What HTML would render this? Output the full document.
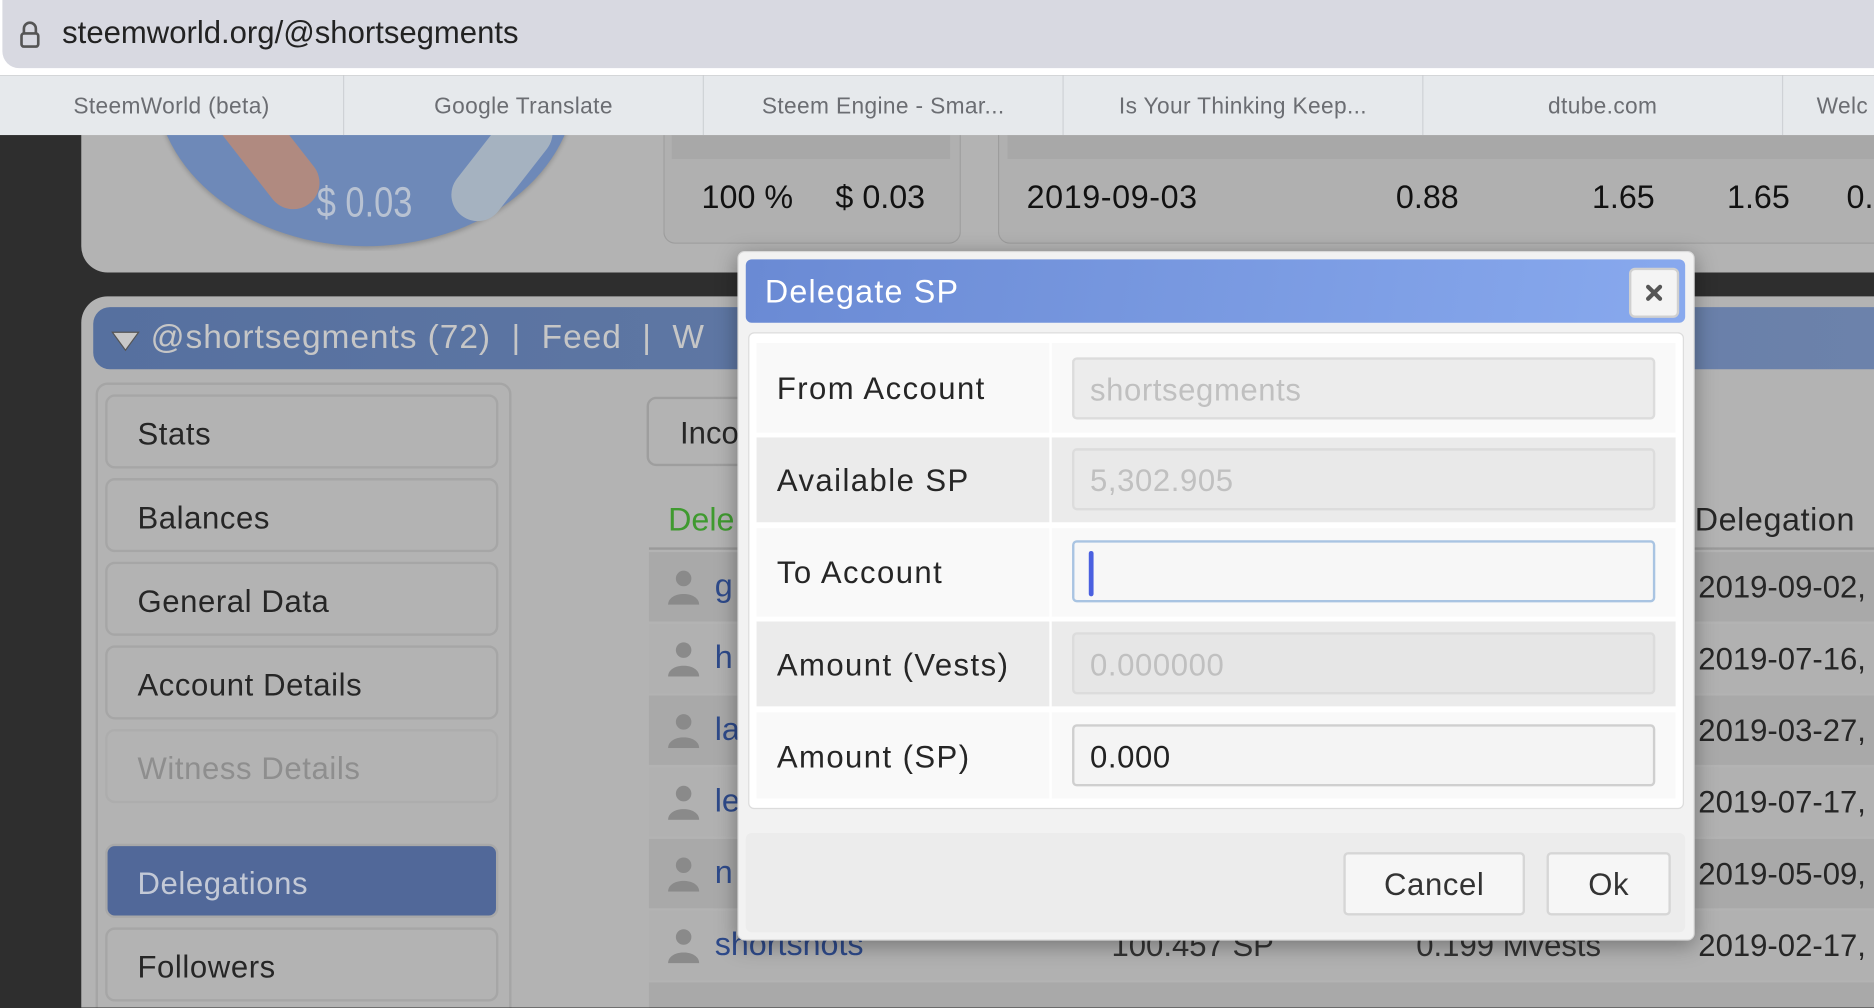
<!DOCTYPE html>
<html><head><meta charset="utf-8"><style>
html,body{margin:0;padding:0;width:1874px;height:1008px;overflow:hidden;background:#2e2e2e;font-family:"Liberation Sans","DejaVu Sans",sans-serif}
#s{position:absolute;left:0;top:0;width:1568px;height:843px;transform:scale(1.19515);transform-origin:0 0;overflow:hidden;background:#2e2e2e}
.a{position:absolute}
.tab{position:absolute;top:63px;height:50px;line-height:54px;text-align:center;color:#6b6d72;font-size:19px;border-right:1px solid #cfd2d6;letter-spacing:.3px}
.mb{position:absolute;left:88px;width:329px;height:62px;border:2px solid #a6a6a6;border-radius:8px;background:#b3b3b3;font-size:26px;color:#262626;line-height:62px;padding-left:25px;box-sizing:border-box;letter-spacing:.5px}
.row{position:absolute;left:543px;width:1025px;height:58px}
.pic{position:absolute;left:558px;width:28px;height:30px}
.nm{position:absolute;left:598px;font-size:27px;color:#2e4a8a}
.dt{position:absolute;left:1421px;font-size:26px;color:#262626}
.lab{position:absolute;left:650px;font-size:26px;color:#262626;letter-spacing:1.2px}
.inp{position:absolute;left:897px;width:488px;height:52px;box-sizing:border-box;border:2px solid #dcdcdc;border-radius:4px;background:#ececec;font-size:26px;color:#c0c0c0;padding-left:13px;line-height:50px;letter-spacing:.5px}
.btn{position:absolute;top:713px;height:53px;box-sizing:border-box;border:2px solid #d6d6d6;border-radius:4px;background:#f6f6f6;font-size:26px;color:#333;text-align:center;line-height:51px;letter-spacing:.5px}
</style></head><body><div id="s">
<!-- page content (dimmed) -->
<div class="a" style="left:68px;top:100px;width:1520px;height:128px;background:#b3b3b3;border-radius:0 0 0 22px"></div>
<div class="a" style="left:130px;top:100px;width:360px;height:110px;overflow:hidden">
 <div class="a" style="left:0;top:-170px;width:352px;height:276px;border-radius:50%;background:#6e89b8;box-shadow:0 2px 4px rgba(0,0,0,.2)"></div>
 <div class="a" style="left:85px;top:-170px;width:180px;height:176px;border-radius:50%;background:#a3adb8"></div>
 <div class="a" style="left:40px;top:5px;width:110px;height:44px;border-radius:22px;background:#b08a80;transform:rotate(52deg)"></div>
 <div class="a" style="left:235px;top:15px;width:110px;height:44px;border-radius:22px;background:#a5b2c0;transform:rotate(-52deg)"></div>
</div>
<div class="a" style="left:265px;top:148px;font-size:36px;color:#b8c2d2;transform:scaleX(.8);transform-origin:0 0">$ 0.03</div>
<div class="a" style="left:555px;top:100px;width:247px;height:103px;background:#b0b0b0;border:1px solid #9d9d9d;border-top:none;border-radius:0 0 10px 10px"></div>
<div class="a" style="left:562px;top:100px;width:233px;height:33px;background:#a8a8a8"></div>
<div class="a" style="left:587px;top:150px;font-size:27px;color:#111">100 %</div>
<div class="a" style="left:699px;top:150px;font-size:27px;color:#111">$ 0.03</div>
<div class="a" style="left:835px;top:100px;width:740px;height:103px;background:#b0b0b0;border:1px solid #9d9d9d;border-top:none;border-radius:0 0 0 10px"></div>
<div class="a" style="left:843px;top:100px;width:730px;height:33px;background:#a8a8a8"></div>
<div class="a" style="left:859px;top:150px;font-size:27px;color:#111;letter-spacing:.5px">2019-09-03</div>
<div class="a" style="left:1168px;top:150px;font-size:27px;color:#111">0.88</div>
<div class="a" style="left:1332px;top:150px;font-size:27px;color:#111">1.65</div>
<div class="a" style="left:1445px;top:150px;font-size:27px;color:#111">1.65</div>
<div class="a" style="left:1545px;top:150px;font-size:27px;color:#111">0.</div>

<!-- browser chrome -->
<div class="a" style="left:0;top:0;width:1568px;height:63px;background:#fff"></div>
<div class="a" style="left:2px;top:0;width:1580px;height:57px;background:#d8d9e1;border-radius:0 0 0 14px"></div>
<svg class="a" style="left:15px;top:17px" width="20" height="24" viewBox="0 0 20 24"><path d="M5 11V7a5 5 0 0 1 10 0v4" fill="none" stroke="#555" stroke-width="2.2"/><rect x="3" y="11" width="14" height="11" rx="2" fill="none" stroke="#555" stroke-width="2.2"/></svg>
<div class="a" style="left:52px;top:12px;font-size:26px;color:#222">steemworld.org/@shortsegments</div>
<div class="a" style="left:0;top:63px;width:1568px;height:50px;background:#e6e9ec"></div>
<div class="tab" style="left:0;width:287px">SteemWorld (beta)</div>
<div class="tab" style="left:288px;width:300px">Google Translate</div>
<div class="tab" style="left:589px;width:300px">Steem Engine - Smar...</div>
<div class="tab" style="left:890px;width:300px">Is Your Thinking Keep...</div>
<div class="tab" style="left:1191px;width:300px">dtube.com</div>
<div class="tab" style="left:1492px;width:120px;text-align:left;padding-left:28px">Welc</div>

<div class="a" style="left:68px;top:248px;width:1520px;height:620px;background:#b3b3b3;border-radius:22px 0 0 0"></div>
<div class="a" style="left:78px;top:257px;width:1500px;height:52px;background:linear-gradient(90deg,#56709f,#6c82ab);border-radius:14px 0 0 14px"></div>
<svg class="a" style="left:92px;top:275px" width="26" height="20"><path d="M2 3 L24 3 L13 18 Z" fill="#c8c8c8" stroke="#555" stroke-width="1"/></svg>
<div class="a" style="left:126px;top:266px;font-size:28px;color:#c6c6c6;letter-spacing:.8px;white-space:nowrap">@shortsegments (72) &nbsp;| &nbsp;Feed &nbsp;| &nbsp;W</div>
<div class="a" style="left:80px;top:320px;width:348px;height:540px;border:2px solid #a5a5a5;border-radius:10px;box-sizing:border-box"></div>
<div class="mb" style="top:330px">Stats</div>
<div class="mb" style="top:400px">Balances</div>
<div class="mb" style="top:470px">General Data</div>
<div class="mb" style="top:540px">Account Details</div>
<div class="mb" style="top:610px;color:#8e8e8e;border-color:#adadad">Witness Details</div>
<div class="mb" style="top:706px;background:#516899;border-color:#a8a8a8;color:#c3c9d6">Delegations</div>
<div class="mb" style="top:776px">Followers</div>
<div class="a" style="left:541px;top:332px;width:90px;height:58px;border:2px solid #9e9e9e;border-radius:8px;box-sizing:border-box;font-size:26px;color:#262626;line-height:56px;padding-left:26px">Inco</div>
<div class="a" style="left:559px;top:420px;font-size:27px;color:#3f9a2f">Dele</div>
<div class="a" style="left:1418px;top:420px;font-size:27px;color:#262626;letter-spacing:.5px">Delegation</div>
<div class="a" style="left:543px;top:458px;width:1030px;height:2px;background:#9a9a9a"></div>
<div class="row" style="top:462px;background:#a9a9a9"></div>
<div class="row" style="top:522px;background:#b1b1b1"></div>
<div class="row" style="top:582px;background:#a9a9a9"></div>
<div class="row" style="top:642px;background:#b1b1b1"></div>
<div class="row" style="top:702px;background:#a9a9a9"></div>
<div class="row" style="top:762px;background:#b1b1b1"></div>
<div class="row" style="top:822px;background:#a9a9a9"></div>
<svg width="0" height="0" style="position:absolute"><defs><symbol id="p" viewBox="0 0 28 30"><circle cx="14" cy="8" r="6.5" fill="#8a8a8a"/><path d="M1 30 C1 18 27 18 27 30 Z" fill="#8a8a8a"/></symbol></defs></svg>
<svg class="pic" style="top:476px"><use href="#p"/></svg>
<svg class="pic" style="top:536px"><use href="#p"/></svg>
<svg class="pic" style="top:596px"><use href="#p"/></svg>
<svg class="pic" style="top:656px"><use href="#p"/></svg>
<svg class="pic" style="top:716px"><use href="#p"/></svg>
<svg class="pic" style="top:776px"><use href="#p"/></svg>
<div class="nm" style="top:475px">g</div><div class="nm" style="top:535px">h</div><div class="nm" style="top:595px">la</div><div class="nm" style="top:655px">le</div><div class="nm" style="top:715px">n</div>
<div class="nm" style="top:775px">shortshots</div>
<div class="a" style="left:930px;top:776px;font-size:26px;color:#333">100.457 SP</div>
<div class="a" style="left:1185px;top:776px;font-size:26px;color:#333">0.199 Mvests</div>
<div class="dt" style="top:476px">2019-09-02,</div><div class="dt" style="top:536px">2019-07-16,</div><div class="dt" style="top:596px">2019-03-27,</div><div class="dt" style="top:656px">2019-07-17,</div><div class="dt" style="top:716px">2019-05-09,</div><div class="dt" style="top:776px">2019-02-17,</div>

<!-- modal -->
<div class="a" style="left:617px;top:210px;width:801px;height:577px;background:#f2f2f2;border:1px solid #d8d8d8;border-radius:6px;box-sizing:border-box;box-shadow:0 4px 18px rgba(0,0,0,.35)"></div>
<div class="a" style="left:624px;top:217px;width:786px;height:53px;background:linear-gradient(100deg,#6a8ad4,#88a9ee);border-radius:5px"></div>
<div class="a" style="left:640px;top:229px;font-size:27px;color:#fff;letter-spacing:1px">Delegate SP</div>
<div class="a" style="left:1363px;top:224px;width:42px;height:42px;box-sizing:border-box;border:2px solid #d0d0d0;border-radius:5px;background:#f4f4f4"></div>
<svg class="a" style="left:1376px;top:237px" width="16" height="16"><path d="M3 3 L13 13 M13 3 L3 13" stroke="#555" stroke-width="3.5" stroke-linecap="round"/></svg>
<div class="a" style="left:626px;top:278px;width:783px;height:399px;background:#fff;border:1px solid #dcdcdc;border-radius:5px;box-sizing:border-box"></div>
<div class="a" style="left:633px;top:287px;width:769px;height:75px;background:#f9f9f9"></div>
<div class="a" style="left:633px;top:366px;width:769px;height:71px;background:#ebebeb"></div>
<div class="a" style="left:633px;top:442px;width:769px;height:74px;background:#f9f9f9"></div>
<div class="a" style="left:633px;top:520px;width:769px;height:71px;background:#ebebeb"></div>
<div class="a" style="left:633px;top:596px;width:769px;height:72px;background:#f9f9f9"></div>
<div class="a" style="left:878px;top:287px;width:2px;height:381px;background:#fff"></div>
<div class="lab" style="top:310px">From Account</div>
<div class="lab" style="top:387px">Available SP</div>
<div class="lab" style="top:464px">To Account</div>
<div class="lab" style="top:541px">Amount (Vests)</div>
<div class="lab" style="top:618px">Amount (SP)</div>
<div class="inp" style="top:299px">shortsegments</div>
<div class="inp" style="top:375px;background:#e9e9e9">5,302.905</div>
<div class="inp" style="top:452px;background:#f7f7f7;border-color:#a9c4e2"><div class="a" style="left:12px;top:7px;width:4px;height:38px;background:#4a60e0;border-radius:2px"></div></div>
<div class="inp" style="top:529px;background:#e6e6e6">0.000000</div>
<div class="inp" style="top:606px;background:#f4f4f4;border-color:#cfcfcf;color:#222">0.000</div>
<div class="a" style="left:624px;top:697px;width:786px;height:83px;background:#ececec;border-radius:5px"></div>
<div class="btn" style="left:1124px;width:152px">Cancel</div>
<div class="btn" style="left:1294px;width:104px">Ok</div>
</div></body></html>
